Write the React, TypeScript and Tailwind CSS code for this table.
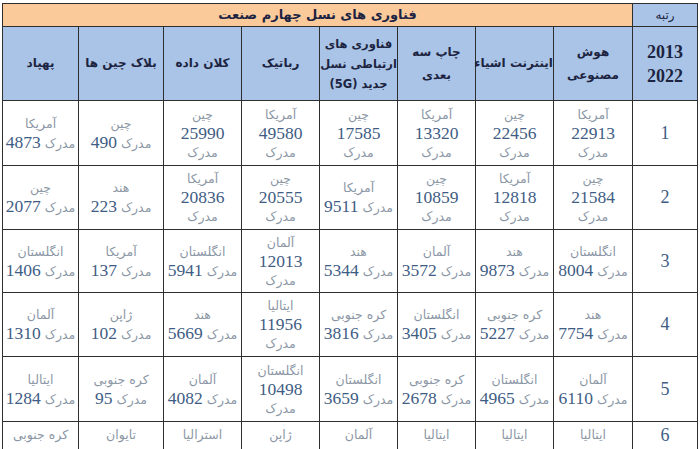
import React from "react";

type Cell = [string, number];

const cols = [
  { w: "w-[65px]" },
  { w: "w-[79px]" },
  { w: "w-[78px]" },
  { w: "w-[78px]" },
  { w: "w-[78px]" },
  { w: "w-[78px]" },
  { w: "w-[78px]" },
  { w: "w-[85px]" },
  { w: "w-[76px]" },
];

const headers: string[][] = [
  ["هوش", "مصنوعی"],
  ["اینترنت اشیاء"],
  ["چاپ سه", "بعدی"],
  ["فناوری های", "ارتباطی نسل", "جدید (5G)"],
  ["رباتیک"],
  ["کلان داده"],
  ["بلاک چین ها"],
  ["پهپاد"],
];

const rows: { h: string; cells: Cell[] }[] = [
  {
    h: "h-[65px]",
    cells: [
      ["آمریکا", 22913],
      ["چین", 22456],
      ["آمریکا", 13320],
      ["چین", 17585],
      ["آمریکا", 49580],
      ["چین", 25990],
      ["چین", 490],
      ["آمریکا", 4873],
    ],
  },
  {
    h: "h-[64px]",
    cells: [
      ["چین", 21584],
      ["آمریکا", 12818],
      ["چین", 10859],
      ["آمریکا", 9511],
      ["چین", 20555],
      ["آمریکا", 20836],
      ["هند", 223],
      ["چین", 2077],
    ],
  },
  {
    h: "h-[63px]",
    cells: [
      ["انگلستان", 8004],
      ["هند", 9873],
      ["آلمان", 3572],
      ["هند", 5344],
      ["آلمان", 12013],
      ["انگلستان", 5941],
      ["آمریکا", 137],
      ["انگلستان", 1406],
    ],
  },
  {
    h: "h-[64px]",
    cells: [
      ["هند", 7754],
      ["کره جنوبی", 5227],
      ["انگلستان", 3405],
      ["کره جنوبی", 3816],
      ["ایتالیا", 11956],
      ["هند", 5669],
      ["ژاپن", 102],
      ["آلمان", 1310],
    ],
  },
  {
    h: "h-[65px]",
    cells: [
      ["آلمان", 6110],
      ["انگلستان", 4965],
      ["کره جنوبی", 2678],
      ["انگلستان", 3659],
      ["انگلستان", 10498],
      ["آلمان", 4082],
      ["کره جنوبی", 95],
      ["ایتالیا", 1284],
    ],
  },
];

const lastRow = ["ایتالیا", "ایتالیا", "ایتالیا", "آلمان", "ژاپن", "استرالیا", "تایوان", "کره جنوبی"];

const fa = "font-['DejaVu_Sans',sans-serif]";
const num = "font-['Liberation_Serif',serif]";
const td = "border border-[#2e2e2e] text-center align-middle p-0";
const ink = "text-[#1d2442]";

function DataCell({ c }: { c: Cell }) {
  const [country, n] = c;
  const long = String(n).length >= 5;
  return (
    <td className={td}>
      <div className="flex flex-col items-center leading-[19px]">
        <span className={`${fa} text-[12.5px] text-[#8c97a6]`}>{country}</span>
        {long ? (
          <>
            <span className={`${num} text-[17.5px] text-[#3f5d84]`}>{n}</span>
            <span className={`${fa} text-[12.5px] text-[#8c97a6]`}>مدرک</span>
          </>
        ) : (
          <span dir="ltr" className="flex items-baseline gap-1">
            <span className={`${num} text-[17.5px] text-[#3f5d84]`}>{n}</span>
            <span className={`${fa} text-[12.5px] text-[#8c97a6]`}>مدرک</span>
          </span>
        )}
      </div>
    </td>
  );
}

export default function App() {
  return (
    <div className="w-[700px] h-[449px] bg-white overflow-hidden pt-[3px] pl-[2px]">
      <table dir="rtl" className="table-fixed border-collapse w-[695px]">
        <colgroup>
          {cols.map((c, i) => (
            <col key={i} className={c.w} />
          ))}
        </colgroup>
        <thead>
          <tr className="h-[23px]">
            <th className={`${td} bg-[#a9c4e6] ${fa} text-[12px] font-normal ${ink}`}>رتبه</th>
            <th colSpan={8} className={`${td} bg-[#fbca9b] ${fa} text-[13px] font-bold ${ink}`}>
              فناوری های نسل چهارم صنعت
            </th>
          </tr>
          <tr className="h-[74px]">
            <th className={`${td} bg-[#a9c4e6]`}>
              <div className={`${num} text-[18px] font-bold leading-[24px] ${ink}`}>
                <div>2013</div>
                <div>2022</div>
              </div>
            </th>
            {headers.map((lines, i) => (
              <th key={i} className={`${td} bg-[#a9c4e6]`}>
                <div
                  className={`${fa} ${lines.length > 2 ? "text-[11.5px] leading-[20px]" : "text-[12px] leading-[23px]"} font-bold ${ink}`}
                >
                  {lines.map((l, j) => (
                    <div key={j} className="whitespace-nowrap">{l}</div>
                  ))}
                </div>
              </th>
            ))}
          </tr>
        </thead>
        <tbody>
          {rows.map((r, i) => (
            <tr key={i} className={r.h}>
              <td className={`${td} ${num} text-[18px] text-[#3f5d84]`}>{i + 1}</td>
              {r.cells.map((c, j) => (
                <DataCell key={j} c={c} />
              ))}
            </tr>
          ))}
          <tr className="h-[23px]">
            <td className={`${td} ${num} text-[18px] text-[#3f5d84]`}>6</td>
            {lastRow.map((t, j) => (
              <td key={j} className={`${td} ${fa} text-[12.5px] text-[#8c97a6]`}>
                {t}
              </td>
            ))}
          </tr>
        </tbody>
      </table>
    </div>
  );
}
